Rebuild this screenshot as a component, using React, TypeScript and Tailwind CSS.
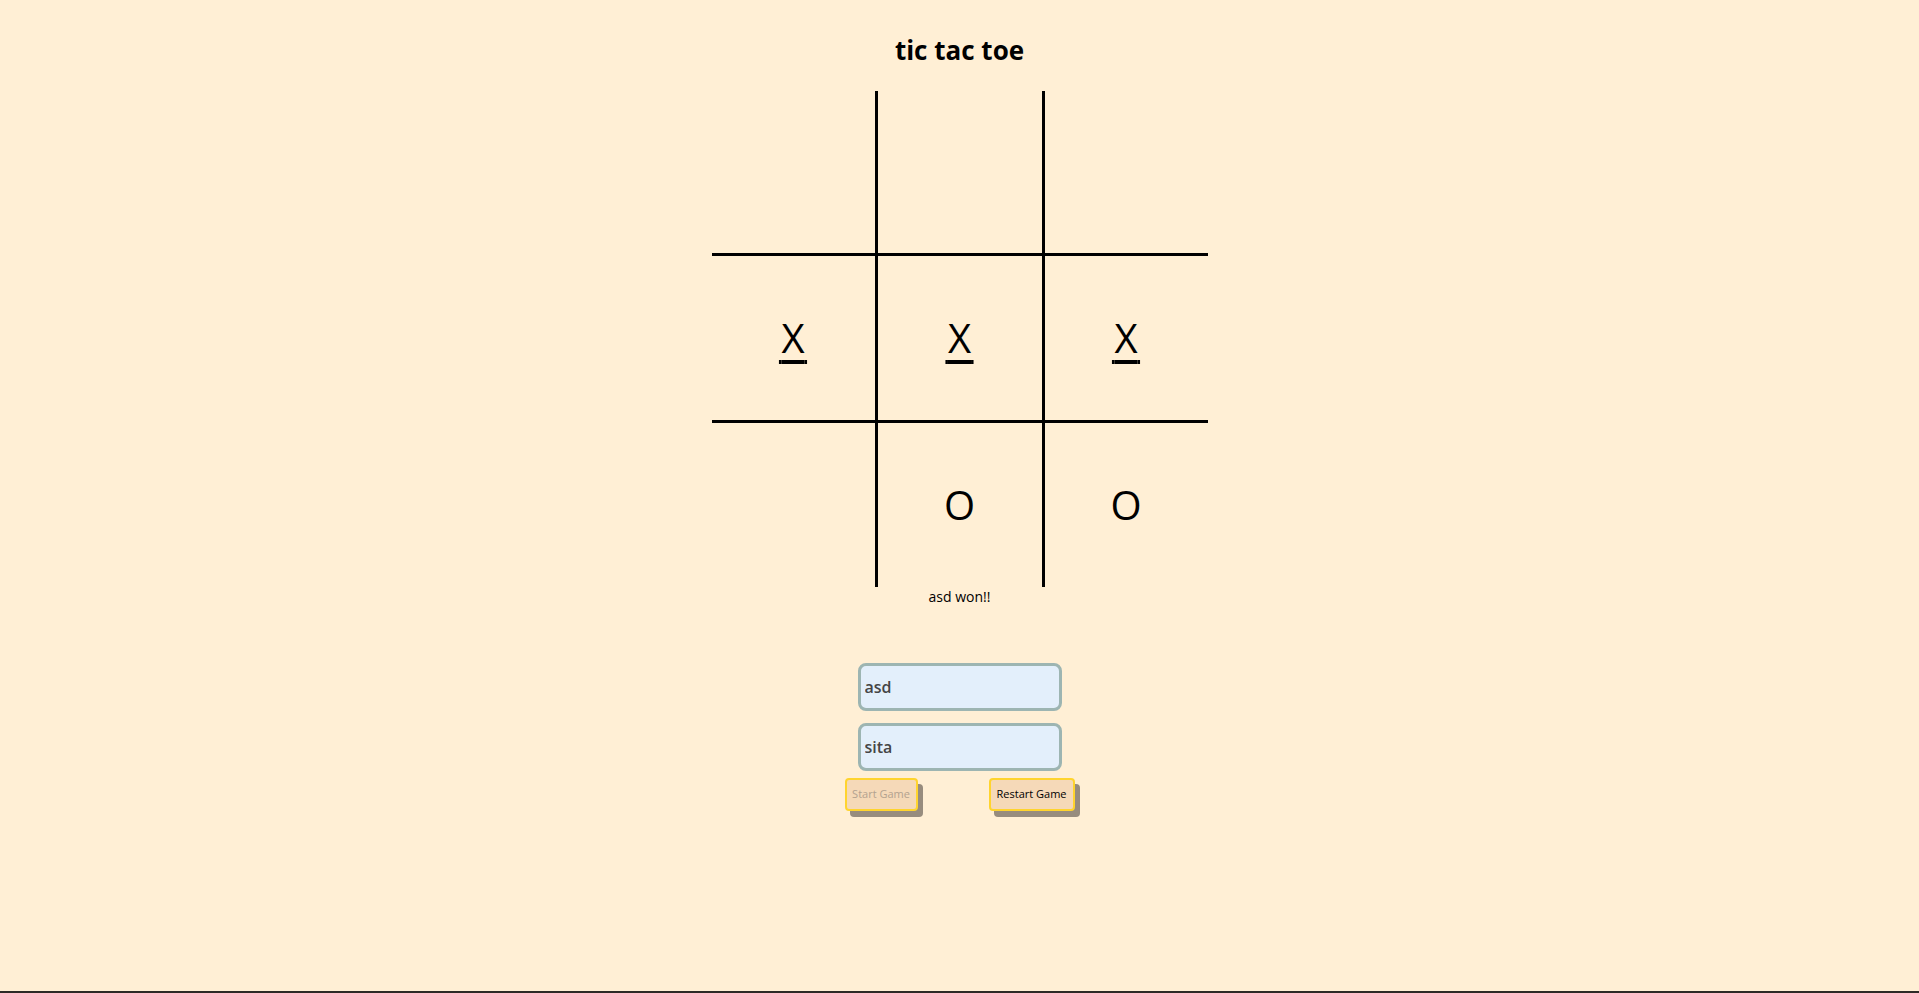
import { useState } from "react";

const cellBase = "flex items-center justify-center border-black text-[40px] text-black";

const cellClass = [
  "w-[166px] h-[165px] border-r-[3px] border-b-[3px]",
  "w-[167px] h-[165px] border-r-[3px] border-b-[3px]",
  "w-[163px] h-[165px] border-b-[3px]",
  "w-[166px] h-[167px] border-r-[3px] border-b-[3px]",
  "w-[167px] h-[167px] border-r-[3px] border-b-[3px]",
  "w-[163px] h-[167px] border-b-[3px]",
  "w-[166px] h-[164px] border-r-[3px]",
  "w-[167px] h-[164px] border-r-[3px]",
  "w-[163px] h-[164px]",
];

const inputClass =
  "h-[48px] w-[204px] rounded-[8px] border-[3px] border-[#9db5b2] bg-[#e3effb] px-[4px] text-[16px] font-semibold text-[#454545] outline-none";

const buttonClass =
  "flex h-[33px] items-center justify-center whitespace-nowrap rounded-[4px] border-2 border-[#ffd42e] bg-[#f5d9b8] px-[4px] text-[11px] shadow-[5px_6px_0_#978c7e]";

export default function App() {
  const [board] = useState(["", "", "", "X", "X", "X", "", "O", "O"]);
  const winLine = [3, 4, 5];
  const [p1, setP1] = useState("asd");
  const [p2, setP2] = useState("sita");

  return (
    <div className="flex h-[993px] flex-col bg-[#ffefd5] font-['Open_Sans',sans-serif]">
      <div className="flex flex-1 flex-col items-center">
        <h1 className="pt-[32px] text-[26px] leading-[36px] font-bold text-black">tic tac toe</h1>

        <div className="mt-[23px] grid grid-cols-[166px_167px_163px]">
          {board.map((v, i) => (
            <div key={i} className={`${cellBase} ${cellClass[i]}`}>
              {winLine.includes(i) ? (
                <span className="underline decoration-4 underline-offset-[7px]">
                  <span className="text-[15px]">{"\u2009"}</span>
                  {v}
                  <span className="text-[15px]">{"\u2009"}</span>
                </span>
              ) : (
                <span>{v}</span>
              )}
            </div>
          ))}
        </div>

        <p className="text-[14px] leading-[20px] text-black">asd won!!</p>

        <div className="mt-[56px] flex flex-col gap-[12px]">
          <input className={inputClass} value={p1} onChange={(e) => setP1(e.target.value)} />
          <input className={inputClass} value={p2} onChange={(e) => setP2(e.target.value)} />
        </div>

        <div className="mt-[7px] flex gap-[71px]">
          <button disabled className={`${buttonClass} w-[73px] text-[#b3a28f]`}>
            Start Game
          </button>
          <button className={`${buttonClass} w-[86px] text-black`}>Restart Game</button>
        </div>
      </div>
      <div className="h-[2px] bg-[#2d2a26]" />
    </div>
  );
}
